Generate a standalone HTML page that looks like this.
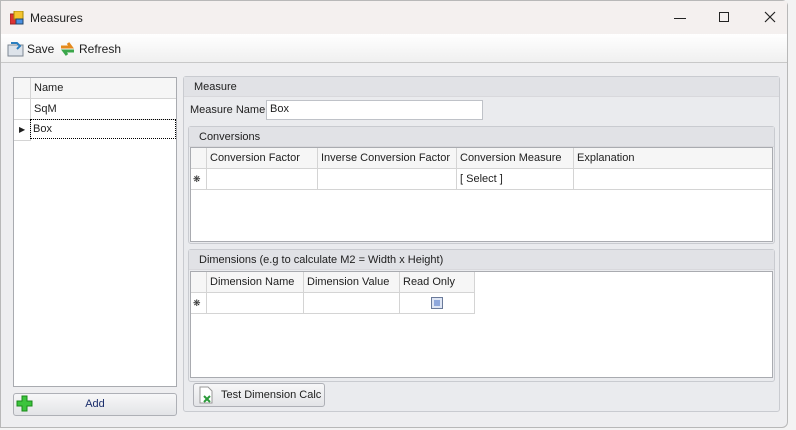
<!DOCTYPE html><html><head><style>
*{margin:0;padding:0;box-sizing:border-box}
body{width:796px;height:430px;background:#f3f3f3;font-family:"Liberation Sans",sans-serif;font-size:11px;color:#1e1e1e;position:relative;overflow:hidden}
.a{position:absolute;white-space:nowrap}
.win{left:0;top:0;width:788px;height:428px;background:#eeeef0;border:1px solid #b8b8b8;border-radius:0 6px 6px 0}
.title{left:1px;top:1px;width:786px;height:33px;background:#f4f0ef}
.tb{left:1px;top:34px;width:786px;height:29px;background:linear-gradient(#fff,#f0f0f0);border-bottom:1px solid #c8c8c8}
.grp{background:#eaebee;border:1px solid #c9cbd0;border-radius:3px}
.gh{background:#e1e2e6;height:20px;line-height:20px;padding-left:10px;border-bottom:1px solid #d8d8dc}
.grid{background:#fff;border:1px solid #a9abb0}
.cell{position:absolute;border-right:1px solid #d4d4d4;border-bottom:1px solid #d4d4d4;padding-left:3px;line-height:20px;height:21px;overflow:hidden;white-space:nowrap}
.hd{background:#f6f6f6}
.btn{border:1px solid #aeb0b6;border-radius:3px;background:linear-gradient(#f7f7f8,#e3e4e7)}
</style></head><body>
<div class="a win"></div>
<div class="a title"></div>
<svg class="a" style="left:10px;top:11px" width="14" height="14"><rect x="0" y="3" width="6" height="10" fill="#d33" stroke="#922"/><rect x="4" y="0" width="9" height="8" fill="#f4c430" stroke="#a80"/><rect x="6" y="8" width="7" height="5" fill="#4a90e2" stroke="#246"/></svg>
<div class="a" style="left:30px;top:11px;font-size:12px">Measures</div>
<div class="a" style="left:674px;top:18px;width:12px;border-top:1px solid #222"></div>
<div class="a" style="left:719px;top:12px;width:10px;height:10px;border:1px solid #222"></div>
<svg class="a" style="left:764px;top:11px" width="12" height="12"><path d="M1 1L11 11M11 1L1 11" stroke="#222" stroke-width="1.2"/></svg>
<div class="a tb"></div>
<svg class="a" style="left:7px;top:40px" width="17" height="17"><rect x="1" y="5" width="15" height="11" fill="#dde3ea" stroke="#7b8691"/><path d="M4 3 h6 l3 3 -3 3" fill="none" stroke="#2a7fc0" stroke-width="2"/></svg>
<div class="a" style="left:27px;top:42px;font-size:12px">Save</div>
<svg class="a" style="left:59px;top:40px" width="17" height="17"><path d="M2 7 h10 l-3 -4" fill="none" stroke="#e58a1c" stroke-width="3"/><path d="M15 11 h-10 l3 4" fill="none" stroke="#3aa64a" stroke-width="3"/></svg>
<div class="a" style="left:79px;top:42px;font-size:12px">Refresh</div>

<div class="a grid" style="left:13px;top:77px;width:164px;height:310px"></div>
<div class="a cell hd" style="left:14px;top:78px;width:17px"></div>
<div class="a cell hd" style="left:31px;top:78px;width:145px;border-right:0">Name</div>
<div class="a cell" style="left:14px;top:99px;width:17px"></div>
<div class="a cell" style="left:31px;top:99px;width:145px;border-right:0">SqM</div>
<div class="a cell" style="left:14px;top:120px;width:17px;font-size:8px;padding-left:5px">▶</div>
<div class="a" style="left:30px;top:119px;width:146px;height:20px;border:1px dotted #000;padding-left:2px;line-height:18px">Box</div>
<div class="a btn" style="left:13px;top:393px;width:164px;height:23px;text-align:center;line-height:21px;color:#1a2d6b">Add</div>
<svg class="a" style="left:16px;top:395px" width="17" height="17"><path d="M6 1h5v5h5v5h-5v5h-5v-5h-5v-5h5z" fill="#3cc43c" stroke="#1a8a1a"/></svg>

<div class="a grp" style="left:183px;top:76px;width:597px;height:336px"><div class="gh">Measure</div></div>
<div class="a" style="left:190px;top:104px">Measure Name</div>
<div class="a" style="left:266px;top:100px;width:217px;height:20px;background:#fff;border:1px solid #bfc2c8;padding:2px 3px">Box</div>

<div class="a grp" style="left:188px;top:126px;width:587px;height:118px"><div class="gh">Conversions</div></div>
<div class="a grid" style="left:190px;top:147px;width:583px;height:95px"></div>
<div class="a cell hd" style="left:191px;top:148px;width:16px"></div>
<div class="a cell hd" style="left:207px;top:148px;width:111px">Conversion Factor</div>
<div class="a cell hd" style="left:318px;top:148px;width:139px">Inverse Conversion Factor</div>
<div class="a cell hd" style="left:457px;top:148px;width:117px">Conversion Measure</div>
<div class="a cell hd" style="left:574px;top:148px;width:198px;border-right:0">Explanation</div>
<div class="a cell" style="left:191px;top:169px;width:16px;font-size:9px;padding-left:2px">❋</div>
<div class="a cell" style="left:207px;top:169px;width:111px"></div>
<div class="a cell" style="left:318px;top:169px;width:139px"></div>
<div class="a cell" style="left:457px;top:169px;width:117px">[ Select ]</div>
<div class="a cell" style="left:574px;top:169px;width:198px;border-right:0"></div>

<div class="a grp" style="left:188px;top:249px;width:587px;height:133px"><div class="gh">Dimensions (e.g to calculate M2 = Width x Height)</div></div>
<div class="a grid" style="left:190px;top:271px;width:583px;height:107px"></div>
<div class="a cell hd" style="left:191px;top:272px;width:16px"></div>
<div class="a cell hd" style="left:207px;top:272px;width:97px">Dimension Name</div>
<div class="a cell hd" style="left:304px;top:272px;width:96px">Dimension Value</div>
<div class="a cell hd" style="left:400px;top:272px;width:75px">Read Only</div>
<div class="a cell" style="left:191px;top:293px;width:16px;font-size:9px;padding-left:2px">❋</div>
<div class="a cell" style="left:207px;top:293px;width:97px"></div>
<div class="a cell" style="left:304px;top:293px;width:96px"></div>
<div class="a cell" style="left:400px;top:293px;width:75px"></div>
<div class="a" style="left:431px;top:297px;width:12px;height:12px;border:1px solid #6a7a9a;background:#8fa8dc;box-shadow:inset 0 0 0 2px #dfe6f4"></div>

<div class="a btn" style="left:193px;top:383px;width:132px;height:24px;padding-left:27px;line-height:22px;white-space:nowrap">Test Dimension Calc</div>
<svg class="a" style="left:198px;top:386px" width="16" height="18"><path d="M2 1h8l4 4v12h-12z" fill="#fff" stroke="#999"/><path d="M6 10l6 6M12 10l-6 6" stroke="#2b9a3a" stroke-width="2"/></svg>
</body></html>
